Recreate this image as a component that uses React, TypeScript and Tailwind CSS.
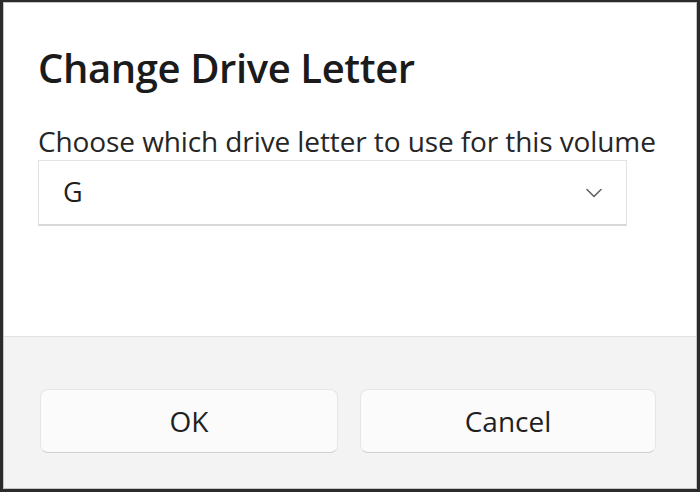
import { ChevronDown } from "lucide-react"

export default function App() {
  return (
    <div className="h-[492px] w-[700px] bg-white font-['Open_Sans',sans-serif] text-[#1b1b1b]">
      <div className="flex h-full flex-col border-t-2 border-r-[3px] border-b-[3px] border-l-[3px] border-[#2b2b2b]">
        <div className="flex flex-1 flex-col border border-[#c4c4c4]">
          <div className="h-[333px] bg-white px-[34px] pt-[41px]">
            <h1 className="text-[40px] leading-[48px] font-semibold tracking-[-0.4px]">Change Drive Letter</h1>
            <p className="mt-[32px] text-[28px] leading-[34px] tracking-[-0.1px] text-[#262626]">
              Choose which drive letter to use for this volume
            </p>
            <div className="mt-[2px] flex h-[66px] w-[589px] items-center justify-between border border-b-2 border-[#e3e3e3] border-b-[#d9d9d9] pr-[18px] pl-[24px]">
              <span className="text-[27px] text-[#1f1f1f]">G</span>
              <ChevronDown className="h-[28px] w-[28px] text-[#5f5f5f]" strokeWidth={1.3} />
            </div>
          </div>
          <div className="flex flex-1 gap-[22px] border-t border-[#e2e2e2] bg-[#f3f3f3] px-[36px] pt-[52px]">
            <button className="h-[64px] w-[298px] rounded-[8px] border border-[#e6e6e6] border-b-[#cfcfcf] bg-[#fbfbfb] text-[28px] text-[#1f1f1f]">
              OK
            </button>
            <button className="h-[64px] w-[296px] rounded-[8px] border border-[#e6e6e6] border-b-[#cfcfcf] bg-[#fbfbfb] text-[28px] text-[#1f1f1f]">
              Cancel
            </button>
          </div>
        </div>
      </div>
    </div>
  )
}
